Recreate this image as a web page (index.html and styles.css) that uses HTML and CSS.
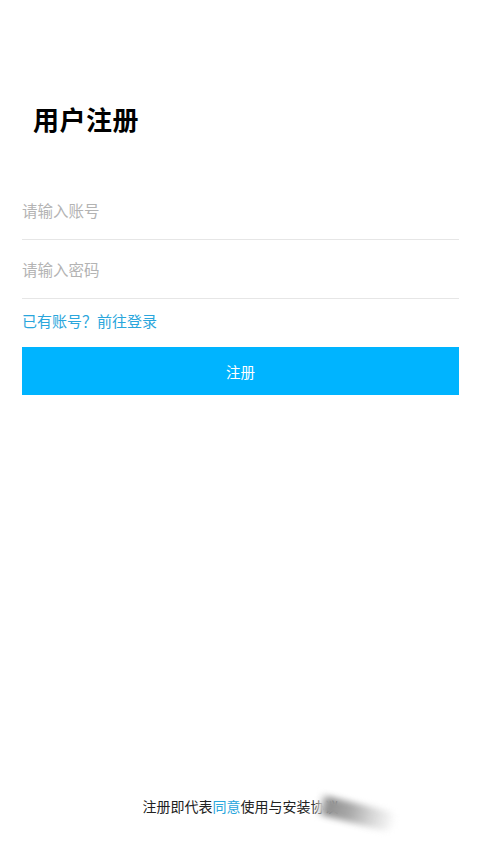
FILE: index.html
```html
<!DOCTYPE html>
<html lang="zh">
<head>
<meta charset="utf-8">
<link rel="stylesheet" href="styles.css">
</head>
<body>
<div class="page">
  <h1 class="title">用户注册</h1>
  <div class="field"><input class="input" type="text" placeholder="请输入账号"></div>
  <div class="field"><input class="input" type="password" placeholder="请输入密码"></div>
  <a class="link">已有账号？前往登录</a>
  <button class="btn">注册</button>
  <div class="footer">
    <span class="footer-text">注册即代表<span class="agree">同意</span>使用与安装协议</span>
    <span class="smear"></span>
  </div>
</div>
</body>
</html>
```
FILE: styles.css
```css
html, body {
  margin: 0;
  padding: 0;
  background: #ffffff;
}
body {
  font-family: "Noto Sans CJK SC", "Noto Sans", sans-serif;
}
.page {
  min-height: 855px;
  box-sizing: border-box;
  display: flex;
  flex-direction: column;
  padding: 0 22px 39px;
}
.title {
  margin: 101px 0 0 11px;
  font-size: 26px;
  line-height: 36px;
  font-weight: 700;
  color: #000;
  letter-spacing: 0.5px;
}
.field {
  border-bottom: 1px solid #e6e6e6;
}
.title + .field {
  margin-top: 44px;
}
.input {
  display: block;
  width: 100%;
  box-sizing: border-box;
  height: 58px;
  border: none;
  outline: none;
  padding: 0;
  font-family: inherit;
  font-size: 15.5px;
  background: transparent;
}
.input::placeholder {
  color: #b3b3b3;
}
.link {
  margin-top: 11px;
  font-size: 15px;
  line-height: 22px;
  color: #2aa6dc;
}
.btn {
  margin-top: 15px;
  height: 48px;
  border: none;
  background: #00b4ff;
  color: #fff;
  font-family: inherit;
  font-size: 14.5px;
  padding: 0;
}
.footer {
  margin-top: auto;
  position: relative;
  text-align: center;
  font-size: 14px;
  line-height: 20px;
  color: #222;
}
.agree {
  color: #2aa6dc;
}
.smear {
  position: absolute;
  left: 296px;
  top: -2px;
  width: 80px;
  height: 20px;
  background: linear-gradient(90deg, #ffffff 0%, #8f8f8f 12%, #a8a8a8 40%, #d8d8d8 70%, rgba(255,255,255,0) 100%);
  filter: blur(3px);
  transform: rotate(14deg);
  transform-origin: left center;
  border-radius: 3px 30px 30px 3px;
}
```
